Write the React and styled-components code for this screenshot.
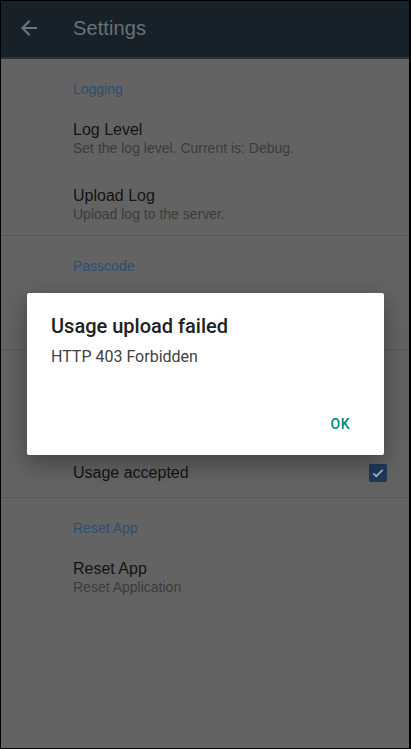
import React from "react";
import styled, { createGlobalStyle } from "styled-components";

const GlobalStyle = createGlobalStyle`
  html, body {
    margin: 0;
    padding: 0;
    background: #000;
  }
  * {
    box-sizing: border-box;
  }
`;

const Screen = styled.div`
  position: relative;
  width: 411px;
  height: 749px;
  overflow: hidden;
  background: #636363;
  border: 1px solid #000;
  border-right-width: 2px;
  font-family: "Liberation Sans", Arial, sans-serif;
`;

const AppBar = styled.div`
  display: flex;
  align-items: center;
  height: 58px;
  padding: 0 0 2px 16px;
  background: #16212a;
  border-bottom: 2px solid #2b3137;
`;

const BackButton = styled.div`
  display: flex;
  width: 24px;
  height: 24px;
  margin-right: 32px;
  color: #6f767b;
`;

const AppTitle = styled.div`
  font-size: 20px;
  color: #6a7176;
  letter-spacing: 0.1px;
`;

const Section = styled.div`
  border-bottom: ${(p) => (p.last ? "none" : "1px solid #575757")};
`;

const Category = styled.div`
  display: flex;
  align-items: center;
  height: 60px;
  padding-left: 72px;
  font-size: 14px;
  color: #2c4f72;
`;

const Item = styled.div`
  display: flex;
  align-items: center;
  padding: 1px 22px ${(p) => p.gap}px 72px;
`;

const ItemText = styled.div`
  flex: 1;
`;

const ItemTitle = styled.div`
  font-size: 16px;
  line-height: 20px;
  color: #131313;
`;

const ItemSub = styled.div`
  font-size: 14px;
  line-height: 16px;
  color: #3b3b3b;
`;

const CheckBox = styled.div`
  display: flex;
  align-items: center;
  justify-content: center;
  width: 18px;
  height: 18px;
  border-radius: 2px;
  background: #1c3a5b;
  color: #a9b3bd;
`;

const Dialog = styled.div`
  position: absolute;
  left: 26px;
  top: 292px;
  width: 357px;
  height: 162px;
  display: flex;
  flex-direction: column;
  padding: 20px 24px 13px;
  background: #fff;
  border-radius: 2px;
  box-shadow: 0 8px 24px rgba(0, 0, 0, 0.35);
  font-family: Roboto, "Liberation Sans", sans-serif;
`;

const DialogTitle = styled.div`
  font-size: 20px;
  line-height: 26px;
  font-weight: 500;
  color: #212121;
`;

const DialogBody = styled.div`
  margin-top: 8px;
  font-size: 16px;
  line-height: 20px;
  color: #424242;
`;

const Actions = styled.div`
  display: flex;
  justify-content: flex-end;
  margin-top: auto;
  margin-right: -16px;
`;

const TextButton = styled.div`
  display: flex;
  align-items: center;
  height: 36px;
  padding: 0 8px;
  margin-right: 18px;
  font-size: 14px;
  font-weight: 500;
  color: #00897b;
  letter-spacing: 0.5px;
`;

// gap: space under each row before the next one
const sections = [
  {
    title: "Logging",
    items: [
      { title: "Log Level", sub: "Set the log level. Current is: Debug.", gap: 29 },
      { title: "Upload Log", sub: "Upload log to the server.", gap: 13 },
    ],
  },
  {
    title: "Passcode",
    items: [{ title: "Manage Passcode", sub: "Change or disable the passcode.", gap: 16 }],
  },
  {
    title: "Usage",
    items: [
      { title: "Upload Usage", sub: "Upload usage data to the server.", gap: 15 },
      { title: "Usage accepted", check: true, gap: 14 },
    ],
  },
  {
    title: "Reset App",
    items: [{ title: "Reset App", sub: "Reset Application", gap: 13 }],
  },
];

export default function App() {
  return (
    <>
      <GlobalStyle />
      <Screen>
        <AppBar>
          <BackButton>
            <svg width="24" height="24" viewBox="0 0 24 24" fill="currentColor">
              <path d="M20 11H7.83l5.59-5.59L12 4l-8 8 8 8 1.41-1.41L7.83 13H20v-2z" />
            </svg>
          </BackButton>
          <AppTitle>Settings</AppTitle>
        </AppBar>

        {sections.map((s, si) => (
          <Section key={s.title} last={si === sections.length - 1}>
            <Category>{s.title}</Category>
            {s.items.map((it) => (
              <Item key={it.title} gap={it.gap}>
                <ItemText>
                  <ItemTitle>{it.title}</ItemTitle>
                  {it.sub && <ItemSub>{it.sub}</ItemSub>}
                </ItemText>
                {it.check && (
                  <CheckBox>
                    <svg width="14" height="14" viewBox="0 0 24 24" fill="none" stroke="currentColor" strokeWidth="3">
                      <path d="M4 12.5l5 5L20 6.5" />
                    </svg>
                  </CheckBox>
                )}
              </Item>
            ))}
          </Section>
        ))}

        <Dialog>
          <DialogTitle>Usage upload failed</DialogTitle>
          <DialogBody>HTTP 403 Forbidden</DialogBody>
          <Actions>
            <TextButton>OK</TextButton>
          </Actions>
        </Dialog>
      </Screen>
    </>
  );
}
